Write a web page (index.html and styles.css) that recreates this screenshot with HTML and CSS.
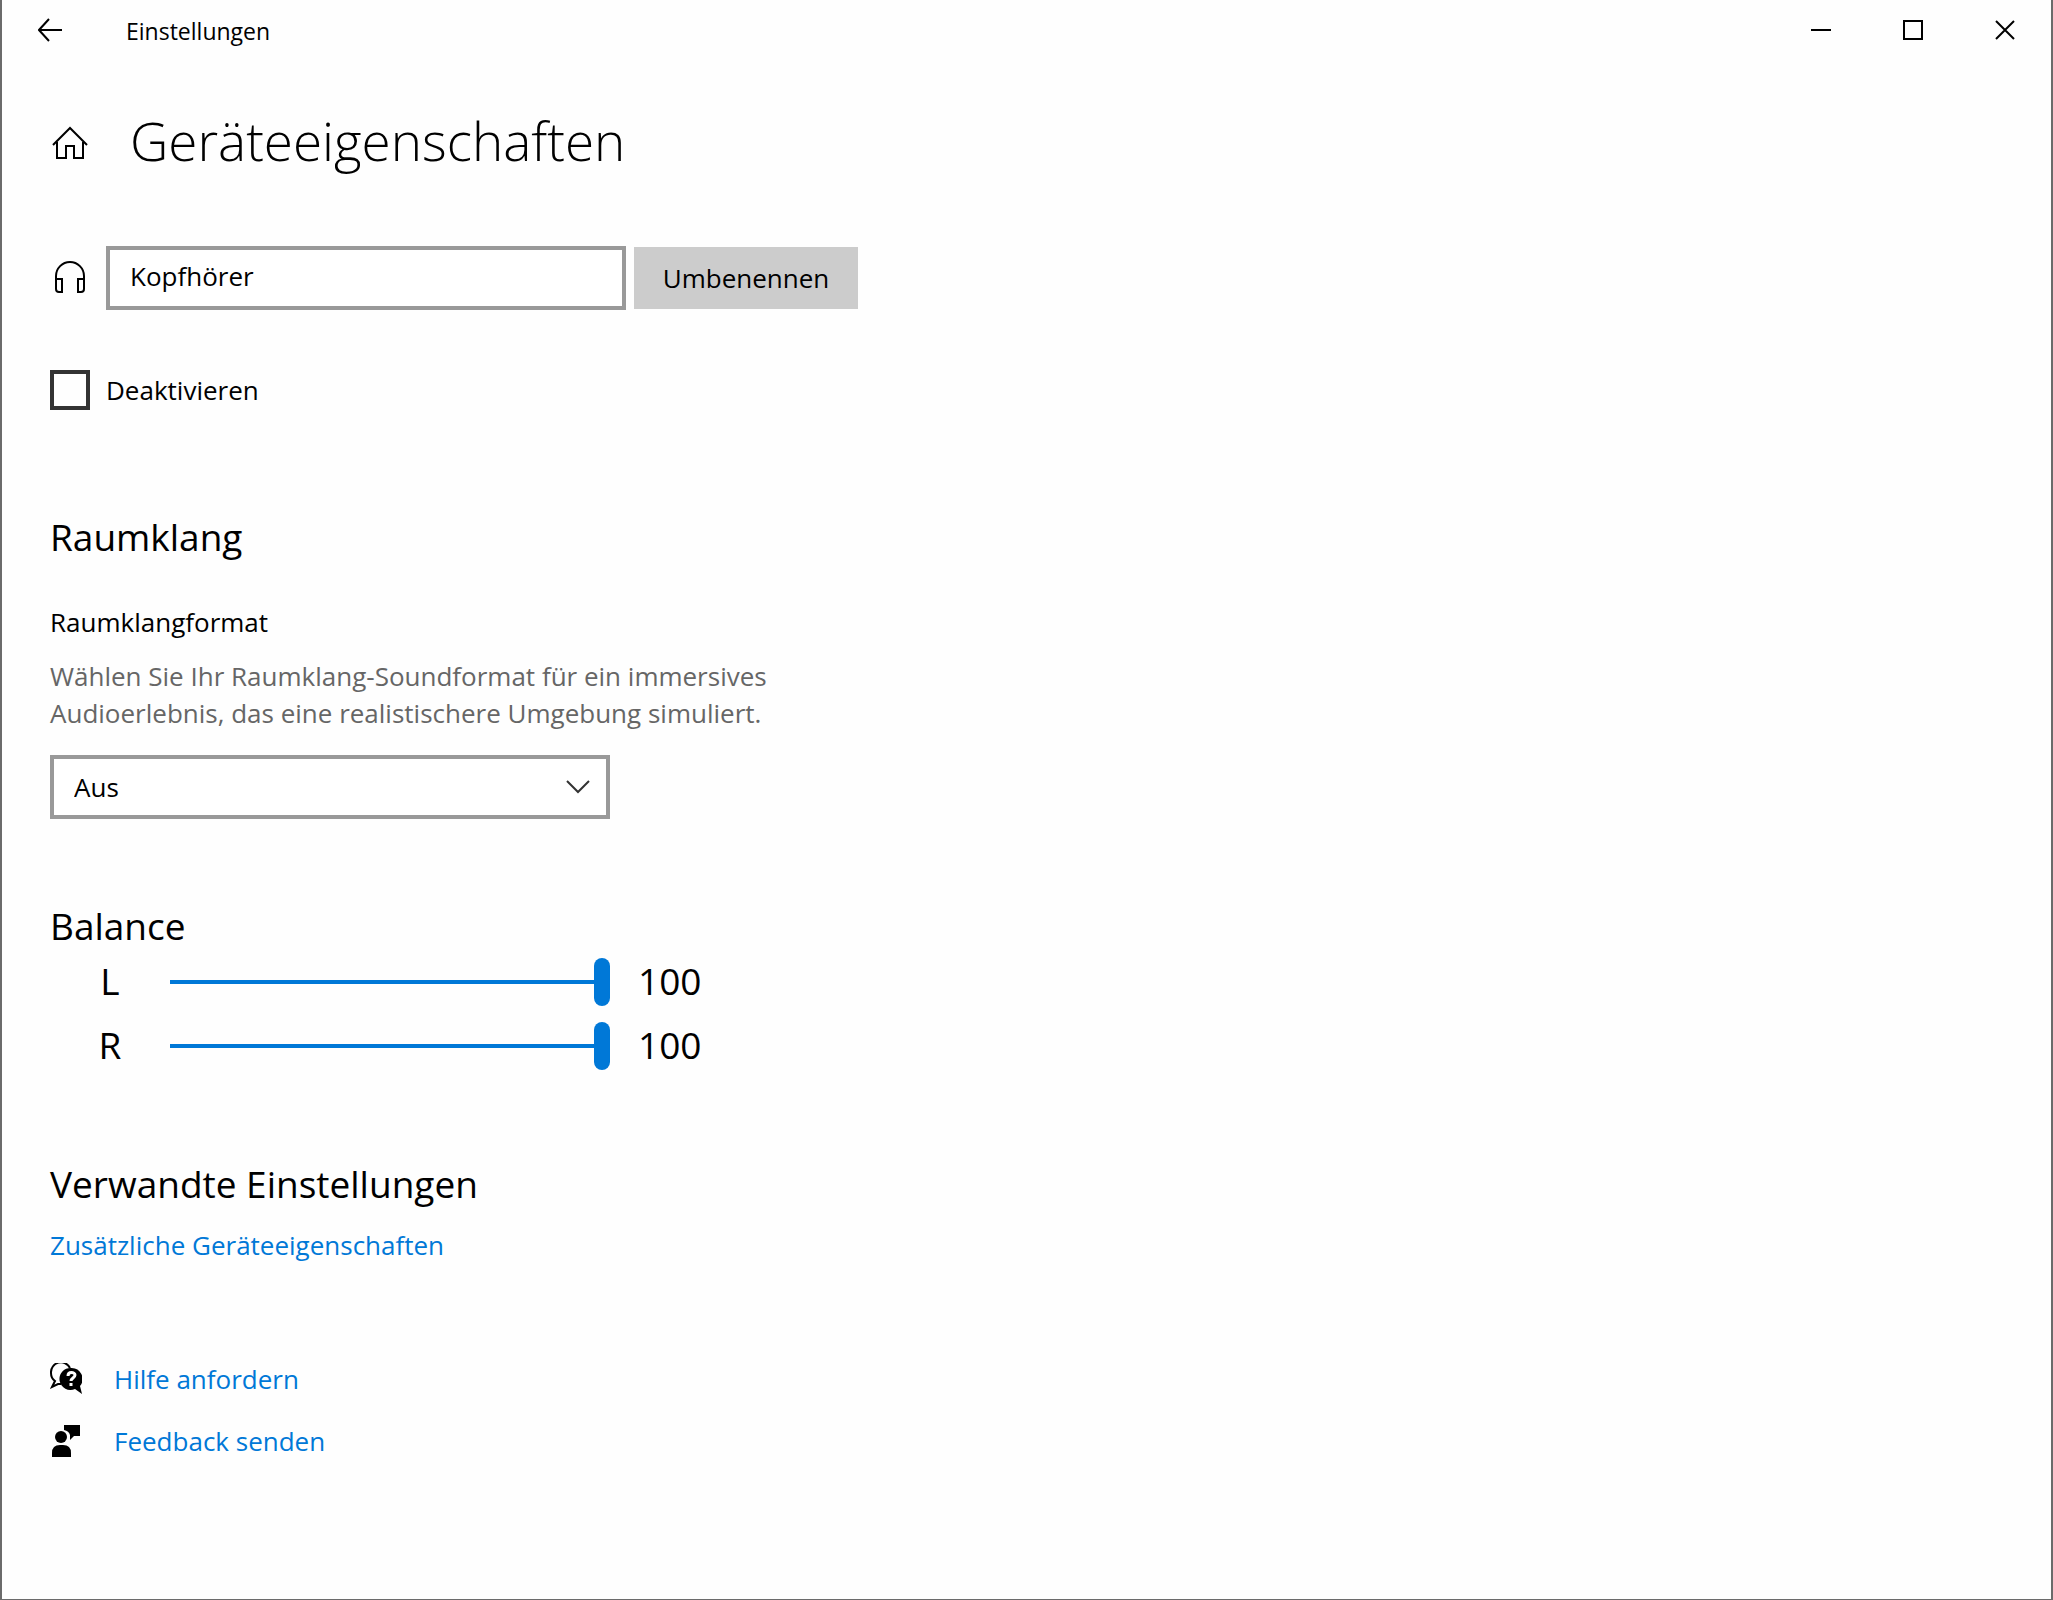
FILE: index.html
```html
<!DOCTYPE html>
<html lang="de">

<head>
    <meta charset="UTF-8">
    <meta name="viewport" content="width=device-width, initial-scale=1.0">
    <title>Einstellungen</title>
    <link rel="stylesheet" href="styles.css">
</head>

<body>
    <div class="window">
        <header class="titlebar">
            <button type="button" class="back" aria-label="Zurück">
                <svg width="24" height="24" viewBox="0 0 24 24"><path d="M11 1 1 12l10 11M1 12h23" /></svg>
            </button>
            <span class="app-name">Einstellungen</span>
            <div class="window-buttons">
                <button type="button" aria-label="Minimieren">
                    <svg width="20" height="20" viewBox="0 0 20 20"><path d="M0 10h20" /></svg>
                </button>
                <button type="button" aria-label="Maximieren">
                    <svg width="20" height="20" viewBox="0 0 20 20"><path d="M1 1h18v18H1z" /></svg>
                </button>
                <button type="button" aria-label="Schließen">
                    <svg width="20" height="20" viewBox="0 0 20 20"><path d="M1 1l18 18M19 1 1 19" /></svg>
                </button>
            </div>
        </header>

        <main>
            <div class="page-title">
                <a href="#" class="home" aria-label="Startseite">
                    <svg width="40" height="40" viewBox="0 0 40 40"><path d="M3 24 20 7l17 17M7 21v16h9V25h8v12h9V21" /></svg>
                </a>
                <h1>Geräteeigenschaften</h1>
            </div>

            <form class="device">
                <svg class="headphones" width="40" height="40" viewBox="0 0 40 40"><path d="M6 22v-4a14 14 0 0 1 28 0v4M6 21v10q0 3 3 3h3V21zM34 21v10q0 3-3 3h-3V21z" /></svg>
                <input type="text" id="deviceName" value="Kopfhörer" aria-label="Gerätename">
                <button type="button" class="rename">Umbenennen</button>
            </form>

            <div class="disable">
                <input type="checkbox" id="disable">
                <label for="disable">Deaktivieren</label>
            </div>

            <section class="spatial">
                <h2>Raumklang</h2>
                <label for="format">Raumklangformat</label>
                <p>Wählen Sie Ihr Raumklang-Soundformat für ein immersives Audioerlebnis, das eine realistischere Umgebung simuliert.</p>
                <div class="select-box">
                    <select id="format">
                        <option>Aus</option>
                    </select>
                    <svg width="24" height="14" viewBox="0 0 24 14"><path d="M1 1l11 11L23 1" /></svg>
                </div>
            </section>

            <section class="balance">
                <h2>Balance</h2>
                <div class="slider">
                    <label for="left">L</label>
                    <input type="range" id="left" min="0" max="100" value="100">
                    <output for="left">100</output>
                </div>
                <div class="slider">
                    <label for="right">R</label>
                    <input type="range" id="right" min="0" max="100" value="100">
                    <output for="right">100</output>
                </div>
            </section>

            <section class="related">
                <h2>Verwandte Einstellungen</h2>
                <a href="#">Zusätzliche Geräteeigenschaften</a>
            </section>

            <nav class="support">
                <a href="#">
                    <svg width="32" height="32" viewBox="0 0 32 32">
                        <path class="line" d="M20 5A10 10 0 0 0 1 10c0 3 1 6 4 8L2 24l6-3h3" />
                        <path d="M21 5a11 11 0 1 0 4 21l7 5-2-8A11 11 0 0 0 21 5z" />
                        <path class="mark" d="M18 13c0-5 7-4 7-1 0 3-4 3-4 6M21 20v3" />
                    </svg>
                    Hilfe anfordern
                </a>
                <a href="#">
                    <svg width="32" height="32" viewBox="0 0 32 32">
                        <circle cx="11" cy="12" r="6" />
                        <path d="M2 32v-4q0-8 8-8h3q8 0 8 8v4zM14 0h16v11h-6l-4 4v-5q-1-4-6-5z" />
                    </svg>
                    Feedback senden
                </a>
            </nav>
        </main>
    </div>
</body>

</html>
```
FILE: styles.css
```css
* {
    box-sizing: border-box;
    margin: 0;
    padding: 0;
    font-family: "Open Sans", "Noto Sans", sans-serif;
}

body {
    background: #fefefe;
    color: #000;
    font-size: 26px;
    line-height: 37px;
}

.window {
    min-height: 100vh;
    border: 2px solid #6b6b6b;
    border-top: none;
    border-bottom-width: 1px;
}

h1 {
    font-size: 53px;
    font-weight: 350;
    line-height: 72px;
}

h2 {
    font-size: 37px;
    font-weight: 400;
    line-height: 48px;
}

a {
    color: #0078d7;
    text-decoration: none;
}

a:hover {
    color: #666;
}

button {
    border: none;
    background: none;
    color: #000;
}

svg {
    display: block;
    flex: none;
    fill: none;
    stroke: #000;
    stroke-width: 2;
}

/* title bar */
.titlebar {
    display: flex;
    align-items: center;
    height: 60px;
}

.back {
    display: flex;
    justify-content: center;
    align-items: center;
    width: 96px;
    height: 60px;
}

.app-name {
    margin-left: 28px;
    padding-top: 2px;
    font-size: 23px;
}

.window-buttons {
    display: flex;
    margin-left: auto;
}

.window-buttons button {
    display: flex;
    justify-content: center;
    align-items: center;
    width: 92px;
    height: 60px;
}

.window-buttons button:hover {
    background: #e5e5e5;
}

main {
    padding: 45px 48px 120px;
}

.page-title {
    display: flex;
    align-items: center;
    gap: 40px;
}

/* device name */
.device {
    display: flex;
    align-items: center;
    margin-top: 69px;
}

.device input {
    width: 520px;
    height: 64px;
    margin: 0 8px 0 16px;
    padding: 0 20px 4px;
    border: 4px solid #999;
    background: #fff;
    font-size: 26px;
}

.rename {
    width: 224px;
    height: 62px;
    background: #ccc;
    font-size: 26px;
}

.disable {
    display: flex;
    align-items: center;
    gap: 16px;
    margin-top: 60px;
}

.disable input {
    appearance: none;
    width: 40px;
    height: 40px;
    border: 4px solid #333;
}

.disable input:checked {
    background: #0078d7;
}

/* spatial sound */
.spatial {
    margin-top: 103px;
}

.spatial label {
    display: block;
    margin-top: 43px;
}

.spatial p {
    max-width: 740px;
    margin-top: 17px;
    color: #666;
}

.select-box {
    position: relative;
    width: 560px;
    margin-top: 23px;
}

.select-box select {
    appearance: none;
    width: 100%;
    height: 64px;
    padding: 0 20px;
    border: 4px solid #999;
    background: #fff;
    color: #000;
    font-size: 26px;
}

.select-box svg {
    position: absolute;
    top: 25px;
    right: 20px;
    stroke: #333;
    pointer-events: none;
}

/* balance */
.balance {
    margin-top: 83px;
}

.slider {
    display: flex;
    align-items: center;
    height: 64px;
    font-size: 37px;
}

.slider label,
.slider output {
    padding-bottom: 4px;
}

.slider label {
    width: 120px;
    text-align: center;
}

.slider input {
    appearance: none;
    width: 440px;
    height: 48px;
    margin-right: 28px;
    background: linear-gradient(#0078d7, #0078d7) center / 100% 4px no-repeat;
}

.slider input::-webkit-slider-thumb {
    appearance: none;
    width: 16px;
    height: 48px;
    border-radius: 8px;
    background: #0078d7;
}

/* links */
.related {
    margin-top: 82px;
}

.related a {
    display: inline-block;
    margin-top: 19px;
}

.support {
    margin-top: 84px;
}

.support a {
    display: flex;
    align-items: center;
    gap: 32px;
    width: fit-content;
    height: 62px;
}

.support svg {
    fill: #000;
    stroke: none;
}

.support .line {
    fill: none;
    stroke: #000;
    stroke-width: 2;
}

.support .mark {
    fill: none;
    stroke: #fff;
    stroke-width: 3;
}
```
